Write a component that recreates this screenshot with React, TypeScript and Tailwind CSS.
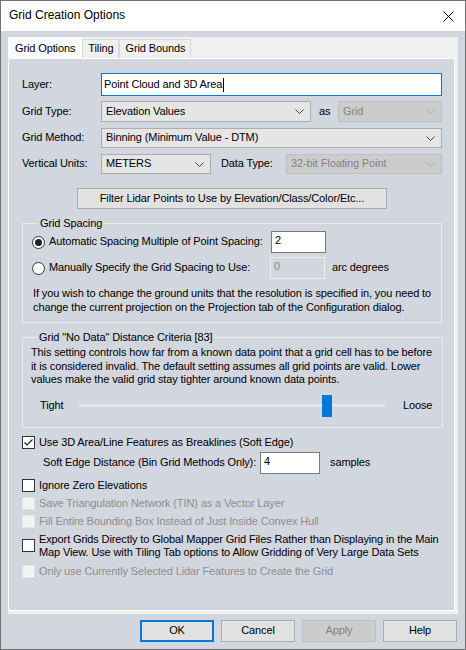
import React from 'react';

const PANEL = 'bg-[#d2d6de]';

const Chevron = ({ disabled }: { disabled?: boolean }) => (
  <svg width="9" height="5" viewBox="0 0 9 5" className="shrink-0">
    <path d="M0.5 0.5 L4.5 4.5 L8.5 0.5" fill="none" stroke={disabled ? '#b0b0b0' : '#404040'} strokeWidth="1" />
  </svg>
);

const Select = ({ value, className, disabled }: { value: string; className: string; disabled?: boolean }) => (
  <div
    className={`flex items-center justify-between border pl-[4px] pr-[6px] ${
      disabled ? 'border-[#bfbfbf] bg-[#cccccc] text-[#838383]' : 'border-[#adadad] bg-[#e5e5e5] text-black'
    } ${className}`}
  >
    <span className="whitespace-nowrap">{value}</span>
    <Chevron disabled={disabled} />
  </div>
);

const TextBox = ({ value, className, disabled }: { value: string; className: string; disabled?: boolean }) => (
  <div
    className={`flex h-[22px] items-start border px-[3px] pt-[2px] ${
      disabled ? 'border-[#eceef2] text-[#8c8c8c]' : 'border-[#7a7a7a] bg-white text-black'
    } ${className}`}
  >
    {value}
  </div>
);

const CheckBox = ({ checked, disabled }: { checked?: boolean; disabled?: boolean }) => (
  <span
    className={`flex h-[13px] w-[13px] shrink-0 items-center justify-center border ${
      disabled ? 'border-[#e4e4e4] bg-[#f3f3f3]' : 'border-[#333333] bg-white'
    }`}
  >
    {checked && (
      <svg width="11" height="11" viewBox="0 0 11 11">
        <path d="M1.5 5.5 L4 8 L9.5 2.5" fill="none" stroke="#222" strokeWidth="1.2" />
      </svg>
    )}
  </span>
);

const Radio = ({ checked }: { checked?: boolean }) => (
  <span className="flex h-[13px] w-[13px] shrink-0 items-center justify-center rounded-full border border-[#333333] bg-white">
    {checked && <span className="h-[7px] w-[7px] rounded-full bg-[#222]" />}
  </span>
);

const Button = ({ label, primary, disabled }: { label: string; primary?: boolean; disabled?: boolean }) => (
  <div
    className={`flex h-[22px] w-[74px] items-center justify-center ${
      primary
        ? 'border-2 border-[#0078d7] bg-[#e1e1e1]'
        : disabled
        ? 'border border-[#bfbfbf] bg-[#cccccc] text-[#838383]'
        : 'border border-[#adadad] bg-[#e1e1e1]'
    }`}
  >
    {label}
  </div>
);

const CheckRow = ({ label, checked, disabled }: { label: string; checked?: boolean; disabled?: boolean }) => (
  <div className={`flex h-[18px] items-center gap-[4px] ${disabled ? 'text-[#8e8e8e]' : 'text-black'}`}>
    <CheckBox checked={checked} disabled={disabled} />
    <span className="whitespace-nowrap">{label}</span>
  </div>
);

const Slider = ({ value }: { value: number }) => {
  const trackWidth = 306;
  const thumbWidth = 10;
  const left = Math.round((trackWidth - thumbWidth) * value);
  return (
    <div className="relative flex h-[22px] w-[306px] items-center">
      <div className="h-[3px] w-full bg-[#e6e6e6]" />
      <div className="absolute top-0 h-[22px] w-[10px] bg-[#0078d7]" style={{ left }} />
    </div>
  );
};

const Tab = ({ label, active }: { label: string; active?: boolean }) => (
  <div
    className={
      active
        ? 'flex h-[22px] items-center border-x border-t border-white bg-[#fbfbfb] px-[6px] -mb-[1px]'
        : 'mt-[3px] flex h-[19px] items-center border-x border-t border-[#d9d9d9] bg-[#f0f0f0] px-[5px]'
    }
  >
    {label}
  </div>
);

export default function App() {
  return (
    <div className="flex h-[650px] w-[466px] flex-col border border-[#707070] bg-[#d2d6de] font-['Liberation_Sans',Arial,sans-serif] text-[11px] leading-[13.5px] tracking-[-0.12px] text-black">
      {/* title bar */}
      <div className="flex h-[30px] shrink-0 items-center justify-between bg-white pl-[8px] pr-[11px]">
        <span className="text-[12px] tracking-normal">Grid Creation Options</span>
        <svg width="11" height="11" viewBox="0 0 11 11">
          <path d="M0.5 0.5 L10.5 10.5 M10.5 0.5 L0.5 10.5" stroke="#000" strokeWidth="1" />
        </svg>
      </div>

      <div className="flex flex-1 flex-col px-[7px] pt-[6px]">
        {/* tab control */}
        <div className="flex h-[577px] flex-col bg-[#f0f0f0] pr-[3px] pb-[3px]">
          <div className="relative z-10 flex h-[21px] items-end">
            <Tab label="Grid Options" active />
            <Tab label="Tiling" />
            <Tab label="Grid Bounds" />
          </div>

          <div className={`flex flex-1 flex-col border border-white ${PANEL} pl-[13px] pr-[12px]`}>
            <div className="mt-[14px] flex items-center">
              <span className="w-[79px]">Layer:</span>
              <div className="flex h-[23px] flex-1 items-center border border-[#0078d7] bg-white px-[2px]">
                Point Cloud and 3D Area
                <span className="ml-[1px] h-[14px] w-[1px] bg-black" />
              </div>
            </div>

            <div className="mt-[5px] flex items-center">
              <span className="w-[79px]">Grid Type:</span>
              <Select value="Elevation Values" className="h-[21px] w-[210px]" />
              <span className="ml-[8px] w-[19px]">as</span>
              <Select value="Grid" className="h-[21px] flex-1" disabled />
            </div>

            <div className="mt-[6px] flex items-center">
              <span className="w-[79px]">Grid Method:</span>
              <Select value="Binning (Minimum Value - DTM)" className="h-[20px] flex-1" />
            </div>

            <div className="mt-[6px] flex items-center">
              <span className="w-[79px]">Vertical Units:</span>
              <Select value="METERS" className="h-[20px] w-[110px]" />
              <span className="ml-[10px] w-[65px]">Data Type:</span>
              <Select value="32-bit Floating Point" className="h-[20px] flex-1" disabled />
            </div>

            <div className="mt-[14px] flex justify-center">
              <div className="flex h-[21px] w-[310px] items-center justify-center border border-[#adadad] bg-[#e1e1e1]">
                Filter Lidar Points to Use by Elevation/Class/Color/Etc...
              </div>
            </div>

            <fieldset className="mt-[7px] border border-[#e9ebef] pr-[10px] pb-[8px] pl-[9px]">
              <legend className="ml-[6px] px-[2px] leading-[14px]">Grid Spacing</legend>
              <div className="mt-[1px] flex h-[22px] items-center">
                <Radio checked />
                <span className="ml-[4px] w-[222px] whitespace-nowrap">Automatic Spacing Multiple of Point Spacing:</span>
                <TextBox value="2" className="w-[55px]" />
              </div>
              <div className="mt-[4px] flex h-[22px] items-center">
                <Radio />
                <span className="ml-[4px] w-[221px] whitespace-nowrap">Manually Specify the Grid Spacing to Use:</span>
                <TextBox value="0" className="w-[55px]" disabled />
                <span className="ml-[7px]">arc degrees</span>
              </div>
              <p className="mt-[8px] pl-[1px] whitespace-nowrap">
                If you wish to change the ground units that the resolution is specified in, you need to
                <br />
                change the current projection on the Projection tab of the Configuration dialog.
              </p>
            </fieldset>

            <fieldset className="mt-[7px] border border-[#e9ebef] pr-[10px] pb-[10px] pl-[8px]">
              <legend className="ml-[6px] px-[2px] leading-[14px]">Grid "No Data" Distance Criteria [83]</legend>
              <p className="mt-[2px] whitespace-nowrap">
                This setting controls how far from a known data point that a grid cell has to be before
                <br />
                it is considered invalid. The default setting assumes all grid points are valid. Lower
                <br />
                values make the valid grid stay tighter around known data points.
              </p>
              <div className="mt-[8px] flex items-center">
                <span className="ml-[9px] w-[39px]">Tight</span>
                <Slider value={0.82} />
                <span className="ml-[18px]">Loose</span>
              </div>
            </fieldset>

            <div className="mt-[6px]">
              <CheckRow label="Use 3D Area/Line Features as Breaklines (Soft Edge)" checked />
            </div>

            <div className="flex h-[22px] items-center">
              <span className="ml-[21px] w-[217px] whitespace-nowrap">Soft Edge Distance (Bin Grid Methods Only):</span>
              <TextBox value="4" className="w-[60px]" />
              <span className="ml-[10px]">samples</span>
            </div>

            <div className="mt-[3px]">
              <CheckRow label="Ignore Zero Elevations" />
              <CheckRow label="Save Triangulation Network (TIN) as a Vector Layer" disabled />
              <CheckRow label="Fill Entire Bounding Box Instead of Just Inside Convex Hull" disabled />
            </div>

            <div className="mt-[2px] flex items-start gap-[4px]">
              <span className="mt-[6px]">
                <CheckBox />
              </span>
              <span className="whitespace-nowrap">
                Export Grids Directly to Global Mapper Grid Files Rather than Displaying in the Main
                <br />
                Map View. Use with Tiling Tab options to Allow Gridding of Very Large Data Sets
              </span>
            </div>

            <div className="mt-[3px]">
              <CheckRow label="Only use Currently Selected Lidar Features to Create the Grid" disabled />
            </div>
          </div>
        </div>

        {/* dialog buttons */}
        <div className="mt-[6px] flex justify-end gap-[7px] pr-[1px]">
          <Button label="OK" primary />
          <Button label="Cancel" />
          <Button label="Apply" disabled />
          <Button label="Help" />
        </div>
      </div>
    </div>
  );
}
